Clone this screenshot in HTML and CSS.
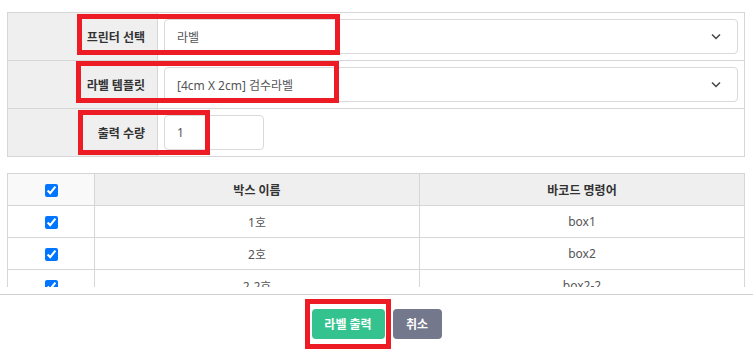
FILE: index.html
```html
<!DOCTYPE html>
<html lang="ko">
<head>
  <meta charset="UTF-8">
  <title>라벨 출력</title>
  <meta name="viewport" content="width=device-width, initial-scale=1.0">
  <link rel="stylesheet" href="styles.css">
</head>
<body>
<div class="label-popup">

  <table class="form-table">
    <tr>
      <th>프린터 선택</th>
      <td>
        <div class="select-box">
          <span>라벨</span>
          <svg class="chevron" width="10" height="7" viewBox="0 0 10 7"><path d="M1 1.5 L5 5.5 L9 1.5" fill="none" stroke="#444" stroke-width="1.5"/></svg>
        </div>
      </td>
    </tr>
    <tr>
      <th>라벨 템플릿</th>
      <td>
        <div class="select-box">
          <span>[4cm X 2cm] 검수라벨</span>
          <svg class="chevron" width="10" height="7" viewBox="0 0 10 7"><path d="M1 1.5 L5 5.5 L9 1.5" fill="none" stroke="#444" stroke-width="1.5"/></svg>
        </div>
      </td>
    </tr>
    <tr>
      <th>출력 수량</th>
      <td><input class="qty-input" type="text" value="1"></td>
    </tr>
  </table>

  <div class="list-wrap">
    <table class="box-table">
      <thead>
        <tr>
          <th class="col-check"><input type="checkbox" checked></th>
          <th>박스 이름</th>
          <th>바코드 명령어</th>
        </tr>
      </thead>
      <tbody>
        <tr><td class="col-check"><input type="checkbox" checked></td><td>1호</td><td>box1</td></tr>
        <tr><td class="col-check"><input type="checkbox" checked></td><td>2호</td><td>box2</td></tr>
        <tr><td class="col-check"><input type="checkbox" checked></td><td>2-2호</td><td>box2-2</td></tr>
        <tr><td class="col-check"><input type="checkbox" checked></td><td>3호</td><td>box3</td></tr>
      </tbody>
    </table>
  </div>

  <div class="popup-footer">
    <button class="btn btn-print">라벨 출력</button>
    <button class="btn btn-cancel">취소</button>
  </div>

  <!-- annotation boxes -->
  <div class="mark mark-printer"></div>
  <div class="mark mark-template"></div>
  <div class="mark mark-qty"></div>
  <div class="mark mark-print"></div>
</div>
</body>
</html>
```

FILE: styles.css
```css
body { margin: 0; background: #fff; font-family: "Noto Sans", "Noto Sans CJK KR", sans-serif; font-size: 12px; color: #555; }
.label-popup { position: relative; width: 753px; height: 353px; overflow: hidden; }

.form-table { margin: 12px 8px 0 7px; width: 738px; border-collapse: collapse; border: 1px solid #d6d6d6; }
.form-table th { width: 137px; background: #efefef; border: 1px solid #d6d6d6; text-align: right; padding: 0 12px 0 0; font-weight: bold; color: #333; }
.form-table td { border: 1px solid #d6d6d6; padding: 6px 6px 6px 6px; height: 35px; }
.select-box { display: flex; align-items: center; justify-content: space-between; height: 33px; border: 1px solid #d9d9d9; border-radius: 4px; padding: 0 16px 0 12px; color: #555; }
.select-box .chevron { display: block; }
.qty-input { box-sizing: border-box; width: 100px; height: 35px; border: 1px solid #d9d9d9; border-radius: 4px; padding: 0 12px; font: inherit; color: #555; outline: none; }

.list-wrap { margin: 16px 8px 0 7px; height: 114px; overflow: hidden; }
.box-table { width: 738px; border-collapse: collapse; table-layout: fixed; }
.box-table th, .box-table td { border: 1px solid #d6d6d6; height: 31px; padding: 0; text-align: center; vertical-align: middle; }
.box-table th { background: #efefef; font-weight: bold; color: #333; }
.box-table th.col-check { background: #f9f9f9; }
.box-table .col-check { width: 86px; }
.box-table input[type=checkbox] { margin: 0; width: 13px; height: 13px; vertical-align: middle; }

.popup-footer { position: absolute; left: 0; right: 0; top: 294px; border-top: 1px solid #cfcfcf; display: flex; justify-content: center; gap: 8px; padding-top: 14px; }
.btn { box-sizing: border-box; height: 30px; border: 0; border-radius: 4px; color: #fff; font: bold 12px "Noto Sans", "Noto Sans CJK KR", sans-serif; padding: 0; white-space: nowrap; }
.btn-print { background: #34c38f; width: 73px; }
.btn-cancel { background: #74788d; width: 49px; }

.mark { position: absolute; border: 5px solid #ed1c24; box-sizing: border-box; }
.mark-printer { left: 77px; top: 14px; width: 263px; height: 41px; }
.mark-template { left: 76px; top: 61px; width: 263px; height: 42px; }
.mark-qty { left: 78px; top: 110px; width: 132px; height: 45px; }
.mark-print { left: 305px; top: 299px; width: 86px; height: 50px; }
```
